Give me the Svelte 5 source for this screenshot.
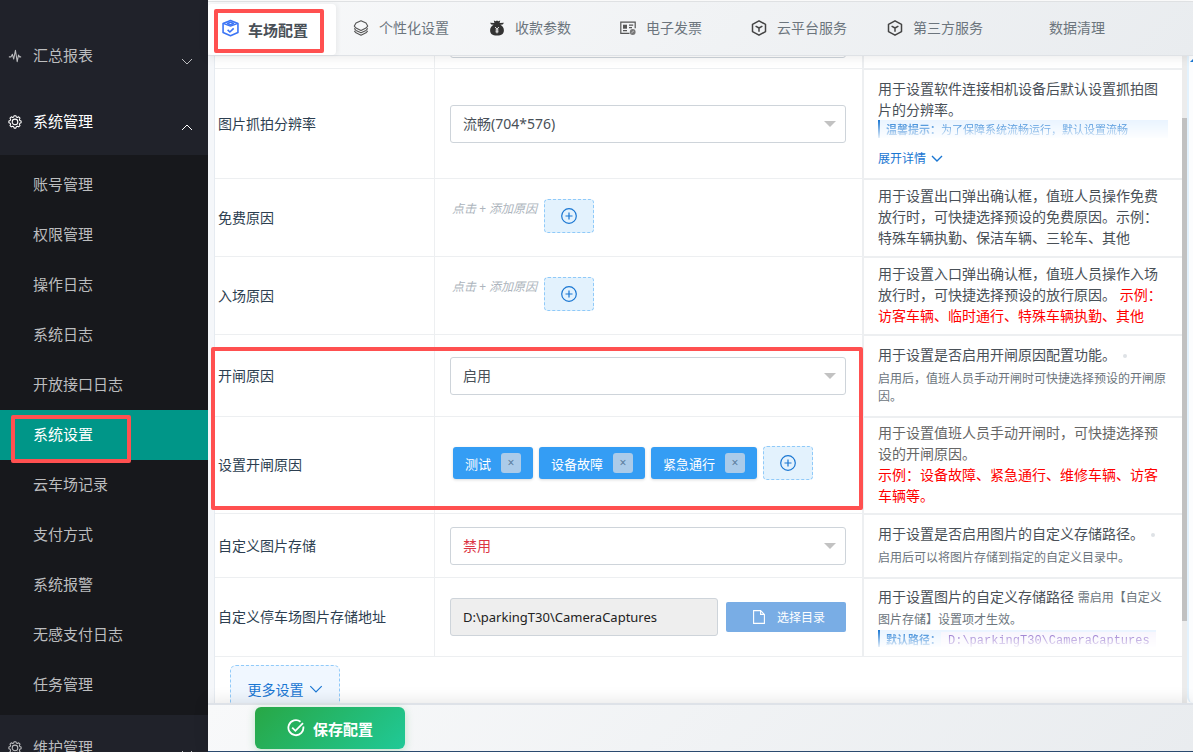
<script>
	const subMenu = [
		'账号管理',
		'权限管理',
		'操作日志',
		'系统日志',
		'开放接口日志',
		'系统设置',
		'云车场记录',
		'支付方式',
		'系统报警',
		'无感支付日志',
		'任务管理'
	];

	const tabs = [
		{ name: '车场配置', icon: 'box' },
		{ name: '个性化设置', icon: 'layers' },
		{ name: '收款参数', icon: 'bag' },
		{ name: '电子发票', icon: 'invoice' },
		{ name: '云平台服务', icon: 'cube' },
		{ name: '第三方服务', icon: 'cube' },
		{ name: '数据清理', icon: '' }
	];

	let activeMenu = $state('系统设置');
	let activeTab = $state('车场配置');
	let openReasons = $state(['测试', '设备故障', '紧急通行']);

	function removeReason(reason) {
		openReasons = openReasons.filter((item) => item !== reason);
	}
</script>

{#snippet gear()}
	<svg class="menu-icon" viewBox="0 0 16 16" aria-hidden="true">
		<path d="M6.500 2.200L7 .8h2l.5 1.400 1.300.6 1.400-.7 1.500 1.500-.7 1.400.5 1.300 1.500.5v2.100l-1.500.5-.5 1.300.7 1.400-1.500 1.500-1.400-.7-1.300.6-.5 1.500H7l-.5-1.500-1.300-.6-1.400.7-1.500-1.500.7-1.400-.5-1.300L1 8.900V6.800l1.500-.5L3 5l-.7-1.400 1.500-1.500 1.400.7z" />
		<circle cx="8" cy="7.900" r="3.200" />
	</svg>
{/snippet}

{#snippet chevron(up)}
	<svg class="chevron" viewBox="0 0 12 7" aria-hidden="true">
		<path d={up ? 'M1 6l5-5 5 5' : 'M1 1l5 5 5-5'} />
	</svg>
{/snippet}

{#snippet tabIcon(icon)}
	<svg class="tab-icon" viewBox="0 0 16 16" aria-hidden="true">
		{#if icon === 'box'}
			<g fill="none" stroke="#3b74f5" stroke-width="1.5" stroke-linejoin="round">
				<path d="M8 .9l7 2.800v8.600l-7 2.900-7-2.900V3.700z" />
				<path d="M1 3.700l7 2.600 7-2.600M5 3.600l3-1.200 3 1.200-3 1.200z" stroke-width="1.200" />
				<path d="M5.300 9.800l2.100 2 3.600-3.500" />
			</g>
		{:else if icon === 'layers'}
			<g fill="none" stroke="#555" stroke-width="1.100" stroke-linejoin="round">
				<path d="M8 .8l5 2.300 1.700 3-1.700 2L8 10.500 3 8.100l-1.700-2L3 3.100z" />
				<path d="M1.300 8.300L3 10.500l5 2.300 5-2.300 1.700-2.200M1.300 10.800L3 12.800l5 2.400 5-2.400 1.700-2" />
			</g>
		{:else if icon === 'bag'}
			<path fill="#333" d="M4.800.5l1.900.8L8 .4l1.300.9 1.900-.8-.6 2.500 4.400-.3-1.300 1.800-2.400.2c2.200 1.100 3.600 3 3.600 5.500 0 3.500-2.100 5.300-6.900 5.300s-6.900-1.800-6.900-5.300c0-2.500 1.400-4.400 3.600-5.500l-2.400-.2L1 2.700l4.400.3z" />
			<path fill="none" stroke="#eee" stroke-width="1" d="M6.200 7L8 9.300 9.800 7M8 9.300v4M6.500 10h3M6.500 11.800h3" />
		{:else if icon === 'invoice'}
			<g fill="none" stroke="#555" stroke-width="1.200">
				<path d="M9.500 13.400H.8V2.200h14.400v6" />
				<path d="M9 5.200h4.200M9 7.700h3M3 10.700h4" />
			</g>
			<path fill="#555" d="M3 4.700h4v4H3z" />
			<circle cx="12.700" cy="12" r="2.900" fill="#777" />
			<path d="M11.500 12.800l2.300-1.800" stroke="#ddd" stroke-width=".8" />
		{:else if icon === 'cube'}
			<g fill="none" stroke="#444" stroke-width="1.500" stroke-linejoin="round">
				<path d="M8 .8l6.500 3.600v7.200L8 15.200l-6.500-3.600V4.400z" />
				<path d="M4.600 6.100L8 8l3.400-1.900M8 8v3.800" />
			</g>
		{/if}
	</svg>
{/snippet}

{#snippet addButton(label)}
	<button type="button" class="add-button" aria-label={label}>
		<svg viewBox="0 0 16 16" aria-hidden="true">
			<circle cx="8" cy="8" r="7.300" />
			<path d="M8 4.500v7M4.500 8h7" />
		</svg>
	</button>
{/snippet}

<div class="app">
	<nav class="sidebar" aria-label="主菜单">
		<button type="button" class="menu-item">
			<svg class="menu-icon" viewBox="0 0 16 16" aria-hidden="true">
				<path d="M1 9h2.500l1.500-3 1.500 5.500L8.500 1.500l2 13L12 7l1.200 2H15" />
			</svg>
			<span>汇总报表</span>
			{@render chevron(false)}
		</button>
		<button type="button" class="menu-item open" aria-expanded="true">
			{@render gear()}
			<span>系统管理</span>
			{@render chevron(true)}
		</button>
		<ul class="sub-menu">
			{#each subMenu as item}
				<li class:active={item === activeMenu}>
					<a href="#{item}" onclick={() => (activeMenu = item)}>{item}</a>
					{#if item === activeMenu}
						<span class="mark mark-menu"></span>
					{/if}
				</li>
			{/each}
		</ul>
		<button type="button" class="menu-item">
			{@render gear()}
			<span>维护管理</span>
			{@render chevron(false)}
		</button>
	</nav>

	<main class="main">
		<div class="tabs" role="tablist">
			{#each tabs as tab}
				<button
					type="button"
					role="tab"
					class="tab"
					class:active={tab.name === activeTab}
					aria-selected={tab.name === activeTab}
					onclick={() => (activeTab = tab.name)}
				>
					{@render tabIcon(tab.icon)}
					<span>{tab.name}</span>
					{#if tab.name === activeTab}
						<i class="mark mark-tab"></i>
					{/if}
				</button>
			{/each}
		</div>

		<div class="body">
			<form class="settings" id="settings-form">
				<div class="row row-cut">
					<div class="label"></div>
					<div class="control">
						<div class="select">
							<select aria-label="抓拍设置"><option></option></select>
						</div>
					</div>
					<div class="desc"></div>
				</div>

				<div class="row row-large">
					<label class="label" for="resolution">图片抓拍分辨率</label>
					<div class="control">
						<div class="select">
							<select id="resolution"><option>流畅(704*576)</option></select>
						</div>
					</div>
					<div class="desc">
						<p>用于设置软件连接相机设备后默认设置抓拍图片的分辨率。</p>
						<div class="tip"><b>温馨提示：</b>为了保障系统流畅运行，默认设置流畅</div>
						<button type="button" class="expand">展开详情 {@render chevron(false)}</button>
					</div>
				</div>

				<div class="row row-medium">
					<div class="label" id="free-label">免费原因</div>
					<div class="control">
						<div class="reasons" role="group" aria-labelledby="free-label">
							<span class="hint">点击 + 添加原因</span>
							{@render addButton('添加免费原因')}
						</div>
					</div>
					<div class="desc">
						<p>用于设置出口弹出确认框，值班人员操作免费放行时，可快捷选择预设的免费原因。示例：特殊车辆执勤、保洁车辆、三轮车、其他</p>
					</div>
				</div>

				<div class="row row-medium">
					<div class="label" id="entry-label">入场原因</div>
					<div class="control">
						<div class="reasons" role="group" aria-labelledby="entry-label">
							<span class="hint">点击 + 添加原因</span>
							{@render addButton('添加入场原因')}
						</div>
					</div>
					<div class="desc">
						<p>用于设置入口弹出确认框，值班人员操作入场放行时，可快捷选择预设的放行原因。 <span class="red">示例：访客车辆、临时通行、特殊车辆执勤、其他</span></p>
					</div>
				</div>

				<div class="group">
					<div class="row row-gate">
						<label class="label" for="gate">开闸原因</label>
						<div class="control">
							<div class="select">
								<select id="gate"><option>启用</option><option>禁用</option></select>
							</div>
						</div>
						<div class="desc">
							<p>用于设置是否启用开闸原因配置功能。<i class="dot"></i></p>
							<p class="small">启用后，值班人员手动开闸时可快捷选择预设的开闸原因。</p>
						</div>
					</div>

					<div class="row row-tags">
						<div class="label" id="tags-label">设置开闸原因</div>
						<div class="control">
							<div class="reasons tags" role="group" aria-labelledby="tags-label">
								{#each openReasons as reason}
									<span class="tag">
										{reason}
										<button type="button" aria-label="删除{reason}" onclick={() => removeReason(reason)}>×</button>
									</span>
								{/each}
								{@render addButton('添加开闸原因')}
							</div>
						</div>
						<div class="desc grey">
							<p>用于设置值班人员手动开闸时，可快捷选择预设的开闸原因。</p>
							<p class="red">示例：设备故障、紧急通行、维修车辆、访客车辆等。</p>
						</div>
					</div>
					<span class="mark mark-group"></span>
				</div>

				<div class="row row-small">
					<label class="label" for="custom-store">自定义图片存储</label>
					<div class="control">
						<div class="select">
							<select id="custom-store" class="disabled"><option>禁用</option><option>启用</option></select>
						</div>
					</div>
					<div class="desc">
						<p>用于设置是否启用图片的自定义存储路径。<i class="dot"></i></p>
						<p class="small">启用后可以将图片存储到指定的自定义目录中。</p>
					</div>
				</div>

				<div class="row row-path">
					<label class="label" for="store-path">自定义停车场图片存储地址</label>
					<div class="control path">
						<input id="store-path" type="text" value={'D:\\parkingT30\\CameraCaptures'} readonly />
						<button type="button" class="browse">
							<svg viewBox="0 0 12 14" aria-hidden="true">
								<path d="M.6.6h7l3.800 3.800v9H.6zM7.600.6v3.800h3.800" />
							</svg>
							选择目录
						</button>
					</div>
					<div class="desc">
						<p>用于设置图片的自定义存储路径 <span class="note">需启用【自定义图片存储】设置项才生效。</span></p>
						<div class="tip tip-path"><b>默认路径：</b><code>D:\parkingT30\CameraCaptures</code></div>
					</div>
				</div>

				<button type="button" class="more">更多设置 {@render chevron(false)}</button>
			</form>

			<div class="track"><div class="thumb"></div></div>
			<aside class="drawer" aria-hidden="true"><i></i></aside>
		</div>

		<footer class="footer">
			<button type="submit" form="settings-form" class="save">
				<svg viewBox="0 0 18 18" aria-hidden="true">
					<path d="M13.500 2.800A7.500 7.500 0 1 0 16.300 7.500M5.200 8.700l3.200 3.100 7.600-7.700" />
				</svg>
				保存配置
			</button>
		</footer>
	</main>
</div>

<style>
	:global(body) {
		margin: 0;
		font-family: 'Noto Sans', 'Noto Sans CJK SC', sans-serif;
		font-size: 14px;
	}

	* {
		box-sizing: border-box;
	}

	button,
	select,
	input {
		margin: 0;
		font: inherit;
	}

	button {
		cursor: pointer;
	}

	p {
		margin: 0;
	}

	.app {
		display: grid;
		grid-template-columns: 208px minmax(0, 1fr);
		height: 100vh;
		overflow: hidden;
	}

	/* sidebar */
	.sidebar {
		min-height: 0;
		padding-top: 23px;
		overflow: hidden;
		background: #20222a;
	}

	.menu-item {
		display: flex;
		align-items: center;
		width: 100%;
		height: 66px;
		padding: 0 15px 0 8px;
		border: 0;
		background: none;
		color: #bcbdbf;
		font-size: 15px;
	}

	.menu-item.open {
		color: #fff;
	}

	.menu-item span {
		flex: 1;
		margin-left: 11px;
		padding-bottom: 4px;
		text-align: left;
	}

	.menu-item .chevron {
		margin-top: 10px;
	}

	.menu-icon {
		width: 14px;
		height: 14px;
		fill: none;
		stroke: currentColor;
		stroke-width: 1.2;
		stroke-linejoin: round;
	}

	.chevron {
		width: 12px;
		height: 7px;
		fill: none;
		stroke: currentColor;
		stroke-width: 1;
	}

	.sub-menu {
		margin: 0;
		padding: 5px 0;
		background: #17181c;
		list-style: none;
	}

	.sub-menu li {
		position: relative;
	}

	.sub-menu a {
		display: block;
		padding: 0 0 2px 33px;
		color: #bcbdbf;
		font-size: 15px;
		line-height: 48px;
		text-decoration: none;
	}

	.sub-menu .active a {
		background: #009688;
		color: #fff;
	}

	/* red highlight frames */
	.mark {
		position: absolute;
		z-index: 3;
		border: 4px solid #ff5050;
		border-radius: 2px;
		pointer-events: none;
	}

	.mark-menu {
		top: 5px;
		bottom: -3px;
		left: 11px;
		width: 120px;
	}

	.mark-tab {
		inset: 5px 12px 2px 6px;
	}

	.mark-group {
		top: 12px;
		right: 319px;
		bottom: 4px;
		left: -4px;
	}

	/* main column */
	.main {
		display: flex;
		flex-direction: column;
		min-width: 0;
		min-height: 0;
		border-top: 1px solid #fff;
	}

	.tabs {
		position: relative;
		z-index: 2;
		display: flex;
		height: 55px;
		border-top: 1px solid #dfe1e3;
		border-bottom: 1px solid #dfe2e6;
		background: linear-gradient(135deg, #f8f9fa, #e9ecef);
		box-shadow: 0 2px 10px rgba(0, 0, 0, 0.08);
	}

	.tab {
		position: relative;
		display: flex;
		flex: none;
		align-items: center;
		gap: 10px;
		min-width: 131px;
		padding: 0 20px;
		border: 0;
		background: none;
		color: #6c757d;
		white-space: nowrap;
	}

	.tab span {
		padding-bottom: 4px;
	}

	.tab.active {
		min-width: 128px;
		margin: 2px -3px 0 0;
		padding: 0 14px;
		border-radius: 4px;
		background: #fff;
		box-shadow: 2px 0 4px rgba(0, 0, 0, 0.05);
		color: #495057;
		font-size: 15px;
		font-weight: 700;
	}

	.tab.active span {
		padding-bottom: 0;
	}

	.tab-icon {
		width: 16px;
		height: 16px;
		margin-bottom: 2px;
	}

	.active .tab-icon {
		width: 17px;
		height: 18px;
		margin: 0 -1px 4px 0;
	}

	.body {
		display: flex;
		flex: 1;
		min-height: 0;
		overflow: hidden;
	}

	.settings {
		flex: 1;
		min-width: 0;
		padding-left: 7px;
		overflow: hidden;
		background: linear-gradient(90deg, #f5f7fa 6px, #e6ebf1 6px, #e6ebf1 7px, #fff 7px);
	}

	.group {
		position: relative;
	}

	.row {
		display: grid;
		grid-template-columns: 220px minmax(0, 1fr) 320px;
		border-bottom: 1px solid #edeff1;
	}

	.row-cut {
		grid-template-rows: 100%;
		height: 13px;
		overflow: hidden;
	}

	.row-cut .control {
		align-items: end;
		padding-bottom: 10px;
	}

	.row-large {
		min-height: 110px;
	}

	.row-medium {
		min-height: 78px;
	}

	.row-gate {
		min-height: 82px;
	}

	.row-tags {
		min-height: 97px;
	}

	.row-small {
		min-height: 64px;
	}

	.row-path {
		min-height: 79px;
	}

	.label {
		display: flex;
		align-items: center;
		padding: 0 0 2px 3px;
		border-right: 1px solid #edeff1;
		color: #2c3e50;
	}

	.control {
		display: flex;
		align-items: center;
		min-width: 0;
		padding: 0 16px 0 15px;
	}

	.desc {
		display: flex;
		flex-direction: column;
		justify-content: center;
		padding: 3px 14px 6px;
		border-top: 1px solid #edeff1;
		border-left: 2px solid #edeff1;
		color: #495057;
		line-height: 21px;
	}

	.row-cut .desc {
		padding: 0;
		border-top: 0;
	}

	.desc .small {
		margin-top: 5px;
		color: #6c757d;
		font-size: 12px;
		line-height: 18px;
	}

	.desc .note {
		color: #6c757d;
		font-size: 12px;
	}

	.desc.grey {
		color: #666;
	}

	.desc .red {
		color: #f00;
	}

	.dot {
		display: inline-block;
		width: 4px;
		height: 4px;
		margin-left: 7px;
		border-radius: 50%;
		background: #dee2e6;
		vertical-align: middle;
	}

	.tip {
		height: 18px;
		padding-left: 6px;
		overflow: hidden;
		border-left: 2px solid #1976d2;
		background: #e9f4ff;
		color: #1976d2;
		font-size: 11px;
		line-height: 20px;
		white-space: nowrap;
		mask-image: linear-gradient(#000, rgba(0, 0, 0, 0.1));
	}

	.tip-path {
		width: 278px;
		height: 17px;
	}

	.tip code {
		padding: 2px 10px 2px 7px;
		background: #f8f5fd;
		color: #7e57c2;
		font-family: 'Liberation Mono', monospace;
		font-size: 12px;
	}

	.expand {
		display: flex;
		gap: 5px;
		align-items: center;
		align-self: flex-start;
		margin-top: 12px;
		padding: 0;
		border: 0;
		background: none;
		color: #1976d2;
		font-size: 12px;
		line-height: 18px;
	}

	.expand .chevron {
		stroke-width: 1.4;
	}

	.select {
		position: relative;
		flex: 1;
	}

	.select::after {
		position: absolute;
		top: 16px;
		right: 10px;
		border: 6px solid transparent;
		border-top-color: #c2c2c2;
		border-bottom: 0;
		content: '';
		pointer-events: none;
	}

	select,
	input {
		display: block;
		width: 100%;
		height: 38px;
		padding: 0 12px;
		border: 1px solid #ced4da;
		border-radius: 3px;
		background: #fff;
		color: #495057;
		appearance: none;
	}

	select.disabled {
		color: #dc3545;
	}

	.reasons {
		display: flex;
		gap: 7px;
		padding: 0 0 4px 2px;
	}

	.hint {
		color: #adb5bd;
		font-size: 12px;
		font-style: italic;
		line-height: 20px;
	}

	.tags {
		align-items: center;
		gap: 6px;
		padding-left: 3px;
	}

	.tag {
		display: flex;
		align-items: center;
		gap: 10px;
		height: 32px;
		padding: 0 12px;
		border-radius: 3px;
		background: #349df4;
		box-shadow: 0 1px 3px rgba(0, 0, 0, 0.15);
		color: #fff;
		font-size: 13px;
	}

	.tag button {
		width: 20px;
		height: 20px;
		padding: 0;
		border: 0;
		border-radius: 3px;
		background: #abcbe9;
		color: #5b7d9d;
		font-size: 12px;
		line-height: 20px;
	}

	.add-button {
		display: flex;
		align-items: center;
		justify-content: center;
		width: 50px;
		height: 34px;
		padding: 0;
		border: 1px dashed #90caf9;
		border-radius: 4px;
		background: #e3f2fd;
	}

	.add-button svg {
		width: 16px;
		height: 16px;
		fill: none;
		stroke: #1976d2;
		stroke-width: 1.2;
	}

	.path {
		gap: 8px;
	}

	.path input {
		flex: 1;
		min-width: 0;
		background: #eee;
		color: #222;
		font-size: 13px;
	}

	.browse {
		display: flex;
		flex: none;
		align-items: center;
		justify-content: center;
		gap: 12px;
		width: 120px;
		height: 30px;
		padding: 0 0 0 6px;
		border: 0;
		border-radius: 2px;
		background: #79ade5;
		color: #fff;
		font-size: 12px;
	}

	.browse svg {
		width: 12px;
		height: 14px;
		fill: none;
		stroke: #fff;
		stroke-width: 1.1;
	}

	.more {
		display: flex;
		align-items: center;
		justify-content: center;
		gap: 5px;
		width: 110px;
		height: 48px;
		margin: 8px 0 0 15px;
		padding: 0;
		border: 1px dashed #90caf9;
		border-radius: 6px;
		background: #f0f7ff;
		color: #1976d2;
	}

	.more .chevron {
		width: 14px;
		height: 8px;
	}

	.track {
		flex: none;
		width: 5px;
		padding-top: 62px;
		background: #ececec;
	}

	.thumb {
		height: 86%;
		background: #c1c1c1;
	}

	.drawer {
		flex: none;
		width: 6px;
		overflow: hidden;
		border-left: 2px solid #e3f2fd;
		border-bottom-left-radius: 6px;
		background: #fcfdfe;
	}

	.drawer i {
		display: block;
		width: 0;
		margin: 2px 0 0 1px;
		border: 4px solid transparent;
		border-top: 0;
		border-bottom-color: #1976d2;
	}

	.footer {
		z-index: 2;
		flex: none;
		padding: 2px 0 2px 47px;
		border-top: 2px solid #dee2e8;
		border-bottom: 1px solid #2b4a6f;
		background: linear-gradient(135deg, #f8f9fa, #e9ecef);
		box-shadow: 0 -2px 16px rgba(0, 0, 0, 0.1);
	}

	.save {
		display: flex;
		align-items: center;
		justify-content: center;
		gap: 8px;
		width: 150px;
		height: 42px;
		padding: 0;
		border: 0;
		border-radius: 6px;
		background: linear-gradient(135deg, #28a745, #20c997);
		box-shadow: 0 2px 8px rgba(40, 167, 69, 0.25);
		color: #fff;
		font-size: 15px;
		font-weight: 700;
	}

	.save svg {
		width: 18px;
		height: 18px;
		fill: none;
		stroke: #fff;
		stroke-width: 1.8;
	}
</style>
